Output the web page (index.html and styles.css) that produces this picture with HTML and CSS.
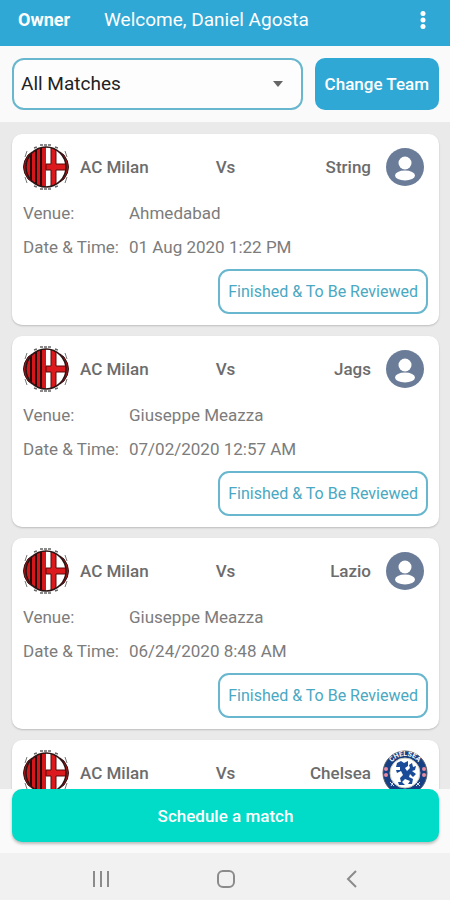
FILE: index.html
```html
<!DOCTYPE html>
<html lang="en">

<head>
    <meta charset="UTF-8">
    <meta name="viewport" content="width=device-width, initial-scale=1.0">
    <title>Matches</title>
    <link rel="stylesheet" href="styles.css">
</head>

<body>
    <svg class="sprite" aria-hidden="true">
        <symbol id="milan" viewBox="0 0 46 46">
            <clipPath id="milanBall">
                <circle cx="23" cy="23" r="20" />
            </clipPath>
            <path d="M11 4L14 3M17 1H29M32 3L35 4M11 42L14 43M17 45H29M32 43L35 42" fill="none" stroke="#666" stroke-width="1.500" stroke-dasharray="3 1" />
            <path d="M4 7L2 13M42 7L44 13M4 39L2 33M42 39L44 33" stroke="#777" stroke-width="1" />
            <path d="M5 11Q-4 23 5 35L9 38V8ZM41 11Q50 23 41 35L37 38V8Z" fill="#a81519" stroke="#3a1212" />
            <circle cx="23" cy="23" r="20" fill="#fff" />
            <g clip-path="url(#milanBall)">
                <path d="M0 0H23V46H0Z" fill="#2a0b0b" />
                <path d="M3 0H7V46H3ZM9 0H12V46H9ZM14 0H17V46H14ZM19 0H23V46H19Z" fill="#d4171b" />
                <path d="M28 0H33V20H46V26H33V46H28V26H23V20H28Z" fill="#dc191d" stroke="#5a0b0b" />
            </g>
            <circle cx="23" cy="23" r="20" fill="none" stroke="#2a1414" stroke-width="1.500" />
        </symbol>
        <symbol id="person" viewBox="0 0 38 38">
            <circle cx="19" cy="19" r="19" fill="#6b7c99" />
            <circle cx="19" cy="15" r="6.500" fill="#fff" />
            <ellipse cx="19" cy="27.500" rx="10" ry="5" fill="#fff" />
        </symbol>
    </svg>

    <header class="topbar">
        <h1 class="role">Owner</h1>
        <p class="welcome">Welcome, Daniel Agosta</p>
        <button class="menu-btn" type="button" aria-label="More options">
            <svg width="6" height="18" viewBox="0 0 6 18" fill="#fff">
                <circle cx="3" cy="2.500" r="2.500" />
                <circle cx="3" cy="9" r="2.500" />
                <circle cx="3" cy="15.500" r="2.500" />
            </svg>
        </button>
    </header>

    <div class="filters">
        <div class="select-wrap">
            <select class="match-select" aria-label="Filter matches">
                <option>All Matches</option>
            </select>
            <svg class="caret" width="10" height="6" viewBox="0 0 10 6"><path d="M0 0H10L5 6Z" fill="#666" /></svg>
        </div>
        <button class="change-btn" type="button">Change Team</button>
    </div>

    <main class="matches">
        <article class="card">
            <div class="teams">
                <svg class="crest"><use href="#milan" /></svg>
                <span>AC Milan</span>
                <span class="vs">Vs</span>
                <span class="away">String</span>
                <svg class="crest avatar"><use href="#person" /></svg>
            </div>
            <dl class="details">
                <dt>Venue:</dt>
                <dd>Ahmedabad</dd>
                <dt>Date &amp; Time:</dt>
                <dd>01 Aug 2020 1:22 PM</dd>
            </dl>
            <button class="status-btn" type="button">Finished &amp; To Be Reviewed</button>
        </article>

        <article class="card">
            <div class="teams">
                <svg class="crest"><use href="#milan" /></svg>
                <span>AC Milan</span>
                <span class="vs">Vs</span>
                <span class="away">Jags</span>
                <svg class="crest avatar"><use href="#person" /></svg>
            </div>
            <dl class="details">
                <dt>Venue:</dt>
                <dd>Giuseppe Meazza</dd>
                <dt>Date &amp; Time:</dt>
                <dd>07/02/2020 12:57 AM</dd>
            </dl>
            <button class="status-btn" type="button">Finished &amp; To Be Reviewed</button>
        </article>

        <article class="card">
            <div class="teams">
                <svg class="crest"><use href="#milan" /></svg>
                <span>AC Milan</span>
                <span class="vs">Vs</span>
                <span class="away">Lazio</span>
                <svg class="crest avatar"><use href="#person" /></svg>
            </div>
            <dl class="details">
                <dt>Venue:</dt>
                <dd>Giuseppe Meazza</dd>
                <dt>Date &amp; Time:</dt>
                <dd>06/24/2020 8:48 AM</dd>
            </dl>
            <button class="status-btn" type="button">Finished &amp; To Be Reviewed</button>
        </article>

        <article class="card">
            <div class="teams">
                <svg class="crest"><use href="#milan" /></svg>
                <span>AC Milan</span>
                <span class="vs">Vs</span>
                <span class="away">Chelsea</span>
                <svg class="crest" viewBox="0 0 46 46">
                    <circle cx="23" cy="23" r="22" fill="#173f83" stroke="#58616a" />
                    <circle cx="23" cy="23" r="15" fill="#fff" stroke="#c9ccba" />
                    <path id="chelseaArc" d="M6 23A17 17 0 0 1 40 23" fill="none" />
                    <text class="crest-text"><textPath href="#chelseaArc" startOffset="50%" text-anchor="middle">CHELSEA</textPath></text>
                    <g fill="#e58ba2">
                        <circle cx="4" cy="19" r="2" />
                        <circle cx="4" cy="25" r="2" />
                        <circle cx="42" cy="19" r="2" />
                        <circle cx="42" cy="25" r="2" />
                    </g>
                    <path d="M15 13L19 11L22 13L26 11V16L23 18L25 21L28 18L27 15L30 13L31 17L34 16L33 20L30 21L34 24L31 27L28 24L27 27L31 29L30 34H26L28 31L23 29L20 32L23 35H17L16 32H19L18 28L21 25L19 21L15 23L14 20H18V17H14Z" fill="#194b98" />
                    <path d="M8 32L12 36M12 31L9 36M34 36L38 32M34 32L38 36" stroke="#d7def0" />
                </svg>
            </div>
        </article>
    </main>

    <div class="schedule">
        <button class="schedule-btn" type="button">Schedule a match</button>
    </div>

    <nav class="navbar" aria-label="System">
        <button type="button" aria-label="Recent apps">
            <svg width="20" height="20" viewBox="0 0 20 20"><path d="M3 2V18M10 2V18M17 2V18" stroke="#8b8b8b" stroke-width="2" /></svg>
        </button>
        <button type="button" aria-label="Home">
            <svg width="20" height="20" viewBox="0 0 20 20"><rect x="2" y="2" width="16" height="16" rx="5" fill="none" stroke="#8b8b8b" stroke-width="2" /></svg>
        </button>
        <button type="button" aria-label="Back">
            <svg width="20" height="20" viewBox="0 0 20 20"><path d="M14 2L6 10L14 18" fill="none" stroke="#8b8b8b" stroke-width="2" /></svg>
        </button>
    </nav>
</body>

</html>
```
FILE: styles.css
```css
* {
    box-sizing: border-box;
}

body {
    margin: 0;
    height: 100vh;
    display: flex;
    flex-direction: column;
    background: #fafafa;
    color: #7c7c7c;
    font-family: Roboto, "Liberation Sans", sans-serif;
    font-size: 16px;
    line-height: 20px;
}

button,
select {
    font: inherit;
    cursor: pointer;
}

button {
    border: none;
    padding: 0;
    background: none;
}

.sprite {
    position: absolute;
    width: 0;
    height: 0;
}

.topbar {
    flex: none;
    height: 46px;
    padding: 0 24px 6px 18px;
    display: flex;
    align-items: center;
    background: #2fa8d5;
    color: #fff;
}

.role {
    margin: 0 34px 0 0;
    font-size: 18px;
    font-weight: 700;
}

.welcome {
    margin: 0;
    flex: 1;
    font-size: 19px;
}

.menu-btn,
.menu-btn svg {
    display: block;
}

.filters {
    flex: none;
    display: flex;
    gap: 12px;
    padding: 12px 11px 12px 12px;
}

.select-wrap {
    position: relative;
    flex: 1;
}

.match-select {
    appearance: none;
    width: 100%;
    height: 52px;
    padding: 0 7px;
    border: 2px solid #68b7ce;
    border-radius: 12px;
    background: #fdfdfd;
    color: #222;
    font-size: 19px;
}

/* arrow lies over the select */
.caret {
    position: absolute;
    right: 20px;
    top: 23px;
    pointer-events: none;
}

.change-btn {
    height: 52px;
    padding: 0 10px;
    border-radius: 10px;
    background: #2fa8d5;
    color: #fff;
    font-size: 17px;
    font-weight: 500;
}

.matches {
    flex: 1;
    min-height: 0;
    overflow: hidden;
    padding: 12px 11px 0 12px;
    display: flex;
    flex-direction: column;
    gap: 11px;
    background: #eaeaea;
}

.card {
    flex: none;
    display: flex;
    flex-direction: column;
    padding: 10px 11px 11px;
    border-radius: 10px;
    background: #fff;
    box-shadow: 0 1px 2px rgba(0, 0, 0, 0.2);
}

.teams {
    display: grid;
    grid-template-columns: 46px 1fr auto 1fr 46px;
    align-items: center;
    gap: 11px;
    font-size: 17px;
    font-weight: 500;
    color: #6c6c6c;
}

.crest {
    display: block;
    width: 46px;
    height: 46px;
}

.avatar {
    padding: 4px;
}

.crest-text {
    font-size: 7px;
    font-weight: 700;
    fill: #fff;
}

.away {
    text-align: right;
}

.details {
    margin: 13px 0 12px;
    display: grid;
    grid-template-columns: 94px 1fr;
    gap: 14px 12px;
    font-size: 17px;
}

.details dt {
    white-space: nowrap;
}

.details dd {
    margin: 0;
}

.status-btn {
    align-self: flex-end;
    height: 45px;
    padding: 0 8px;
    border: 2px solid #68b7ce;
    border-radius: 11px;
    color: #4aa8c2;
}

.schedule {
    flex: none;
    padding: 0 11px 11px 12px;
}

.schedule-btn {
    display: block;
    width: 100%;
    height: 53px;
    border-radius: 10px;
    background: #00dcc8;
    color: #fff;
    font-size: 17px;
    font-weight: 500;
    box-shadow: 0 2px 3px rgba(0, 0, 0, 0.25);
}

.navbar {
    flex: none;
    height: 47px;
    padding: 5px 35px 0 38px;
    display: grid;
    grid-template-columns: repeat(3, 1fr);
    place-items: center;
    background: #f1f1f1;
}

.navbar svg {
    display: block;
}
```
